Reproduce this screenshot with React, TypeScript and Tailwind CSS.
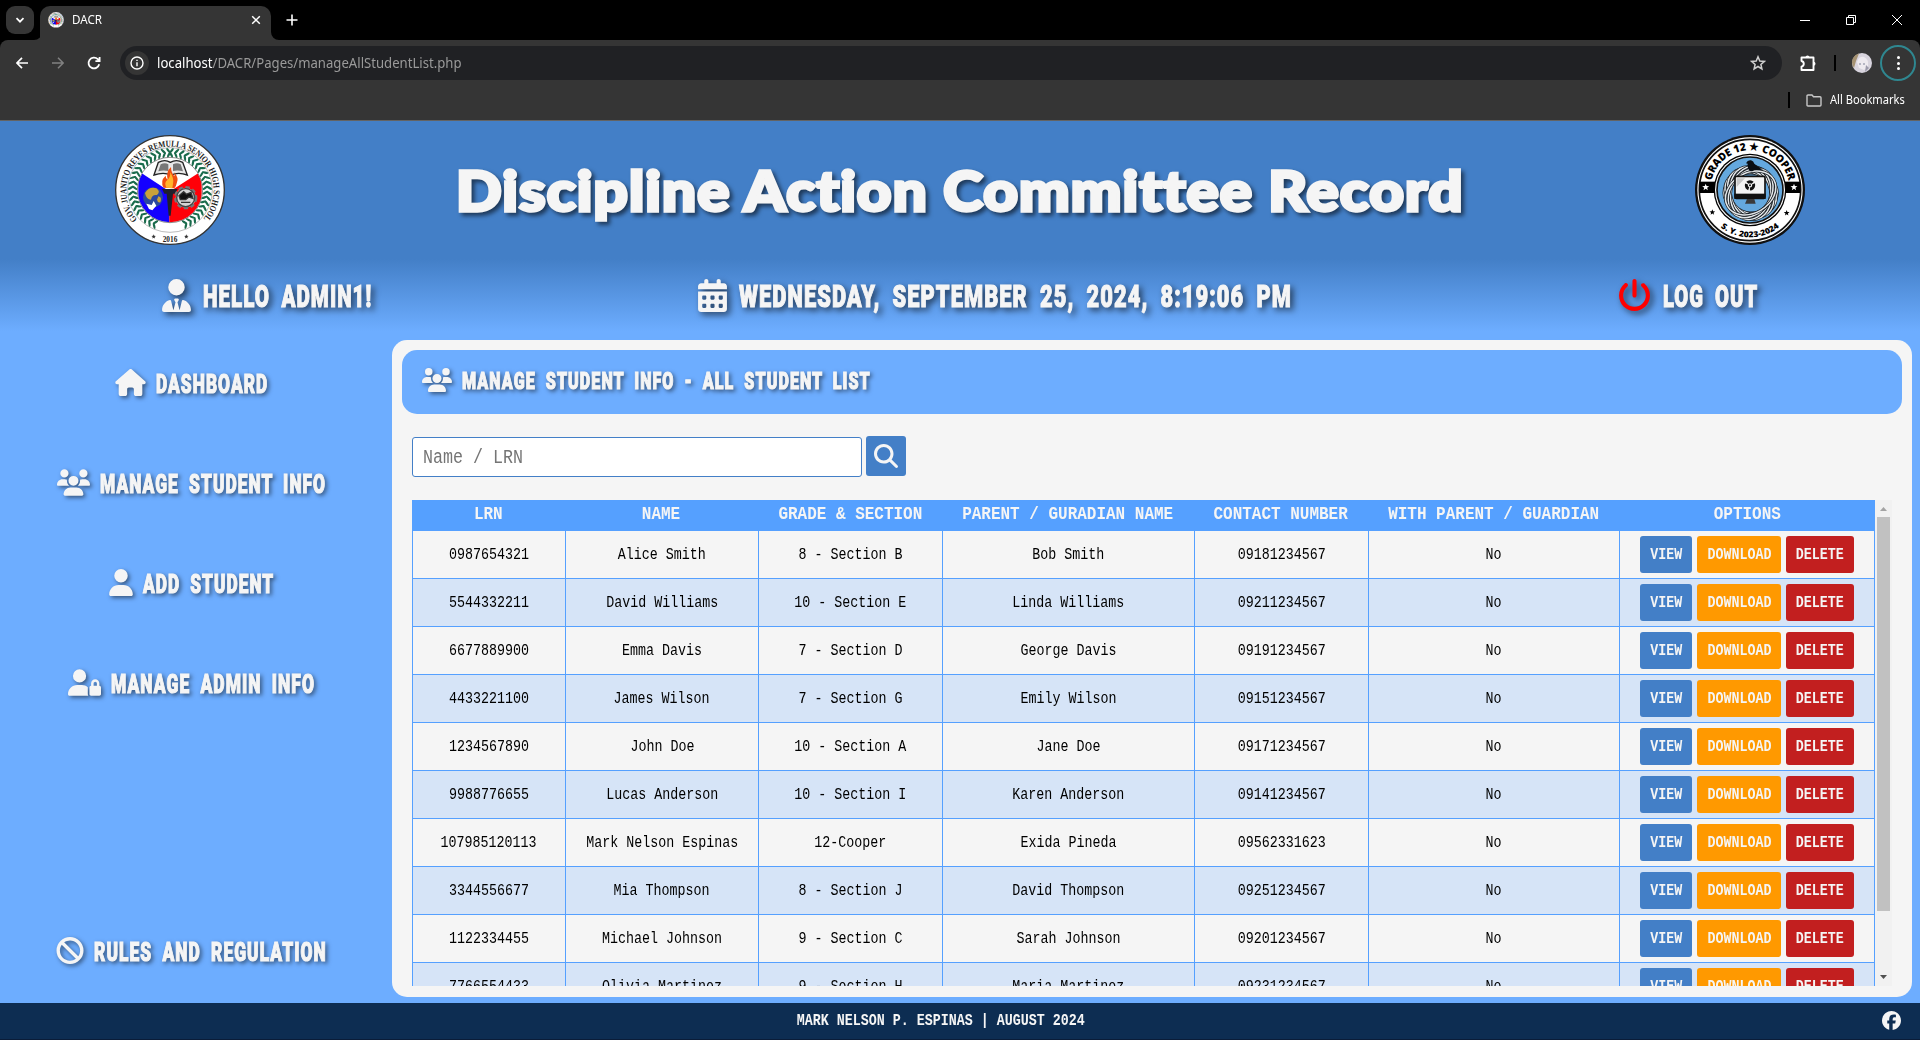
import { useLayoutEffect, useRef, type ReactNode } from "react";
import {
  FaBan,
  FaCalendarDays,
  FaFacebook,
  FaHouse,
  FaMagnifyingGlass,
  FaPowerOff,
  FaUser,
  FaUserLock,
  FaUserTie,
  FaUsers,
} from "react-icons/fa6";

/** Condenses or widens a line of text so that it fills the box's width. */
function Fit({ className, children }: { className: string; children: ReactNode }) {
  const box = useRef<HTMLSpanElement>(null);
  const line = useRef<HTMLSpanElement>(null);
  useLayoutEffect(() => {
    if (box.current && line.current) {
      line.current.style.transform = `scaleX(${box.current.clientWidth / line.current.offsetWidth})`;
    }
  }, []);
  return (
    <span ref={box} className={`flex shrink-0 items-center ${className}`}>
      <span ref={line} className="inline-block shrink-0 origin-left whitespace-pre">
        {children}
      </span>
    </span>
  );
}

/** Narrow monospace text: half an em per character. */
function Mono({ children }: { children: ReactNode }) {
  return <span className="inline-block scale-x-[0.833] whitespace-pre">{children}</span>;
}

const DISPLAY = "font-['Roboto'] font-black uppercase leading-none text-[#f5f5f5] [-webkit-text-stroke:1.1px_#f5f5f5]";

function starPoints(cx: number, cy: number, r: number) {
  return Array.from({ length: 10 }, (_, i) => {
    const a = (-90 + i * 36) * (Math.PI / 180);
    const d = i % 2 ? r * 0.42 : r;
    return `${cx + d * Math.cos(a)},${cy + d * Math.sin(a)}`;
  }).join(" ");
}

function SchoolSeal({ className }: { className: string }) {
  const leaves = Array.from({ length: 21 }, (_, i) => 96 + i * 7.7);
  return (
    <svg viewBox="0 0 330 330" className={className}>
      <defs>
        <path id="seal-arc" d="M67 253 A131 131 0 1 1 263 253" />
        <clipPath id="seal-disc">
          <circle cx="165" cy="165" r="97" />
        </clipPath>
      </defs>
      <circle cx="165" cy="165" r="163" fill="#fff" stroke="#333" strokeWidth="4" />
      <circle cx="165" cy="165" r="127" fill="#fff" stroke="#777" strokeWidth="1.5" />
      <text fontSize="27" fontWeight="700" fill="#1c1c1c" className="font-['Liberation_Serif']">
        <textPath href="#seal-arc" textLength="598" lengthAdjust="spacingAndGlyphs">
          GOV. JUANITO REYES REMULLA SENIOR HIGH SCHOOL
        </textPath>
      </text>
      {leaves.map((a) => (
        <g key={a} fill="#1a6b4c">
          {[1, -1].map((side) => (
            <g key={side} transform={`translate(165 165) scale(${side} 1) rotate(${a + 174})`}>
              <ellipse cx="119" cy="0" rx="10" ry="3.4" transform="rotate(38 112 0)" />
              <ellipse cx="105" cy="0" rx="9.5" ry="3.4" transform="rotate(-30 112 0)" />
            </g>
          ))}
        </g>
      ))}
      <circle cx="165" cy="165" r="97" fill="#fff" />
      <g clipPath="url(#seal-disc)">
        <path d="M165 170 L70 108 V280 H163 Z" fill="#1400ff" />
        <path d="M163 170 L260 108 V280 H163 Z" fill="#ff0008" />
      </g>
      <circle cx="165" cy="165" r="98" fill="none" stroke="#555" strokeWidth="2" />
      <path d="M130 82 Q150 72 166 82 Q184 72 203 82 L217 120 Q190 110 168 120 Q146 110 117 120 Z" fill="#e8e8e8" stroke="#222" strokeWidth="4" />
      <path d="M137 88 Q150 82 160 88 V108 Q144 104 130 109 Z M174 88 Q186 82 197 88 L204 109 Q188 104 174 108 Z" fill="#777" />
      <path d="M146 158 Q134 138 152 122 Q152 132 158 134 Q152 110 168 96 Q168 112 178 124 Q180 116 178 112 Q192 130 186 142 Q184 154 178 160 Z" fill="#f04e10" />
      <path d="M154 158 Q146 142 158 134 Q166 128 166 112 Q178 132 174 146 L172 160 Z" fill="#ffb52a" />
      <path d="M141 162 H188 L180 176 H174 L167 242 H161 L155 176 H148 Z" fill="#20202c" />
      <circle cx="114" cy="187" r="30" fill="#2b48a0" />
      <path d="M90 174 Q102 154 124 160 Q138 170 126 180 Q110 178 108 194 Q94 194 90 174 Z M130 184 Q142 186 136 202 Q128 204 126 194 Z" fill="#c9a13a" />
      <path d="M94 206 L110 210 L116 198 L124 212 L112 226 L102 222 Z" fill="#fff" />
      <circle cx="212" cy="188" r="30" fill="#b8b8b8" stroke="#777" strokeWidth="10" strokeDasharray="12 8" />
      <circle cx="212" cy="188" r="27" fill="#d4d4d4" stroke="#444" strokeWidth="4" />
      <path d="M192 182 L206 170 L214 178 L228 172 L234 190 L222 186 L212 194 L196 194 Z M198 202 H226" fill="#111" stroke="#333" strokeWidth="4" />
      <text x="165" y="320" textAnchor="middle" fontSize="22" fontWeight="700" fill="#222" className="font-['Liberation_Serif']">
        2016
      </text>
      <polygon points={starPoints(116, 305, 7)} fill="#333" />
      <polygon points={starPoints(214, 305, 7)} fill="#333" />
    </svg>
  );
}

function CooperSeal({ className }: { className: string }) {
  const twigs = [0, 25, 50, 75, 100, 125, 150];
  return (
    <svg viewBox="0 0 330 330" className={className}>
      <defs>
        <path id="cooper-top" d="M46 165 A119 119 0 0 1 284 165" />
        <path id="cooper-bottom" d="M23 165 A142 142 0 0 0 307 165" />
      </defs>
      <circle cx="165" cy="165" r="165" fill="#111" />
      <circle cx="165" cy="165" r="158" fill="#fff" />
      <circle cx="165" cy="165" r="152" fill="#fff" stroke="#111" strokeWidth="5" />
      <rect x="14" y="140" width="302" height="34" fill="#000" />
      <circle cx="165" cy="165" r="109" fill="#000" />
      <circle cx="165" cy="165" r="105" fill="#fff" />
      <circle cx="165" cy="165" r="99" fill="#64a8de" stroke="#111" strokeWidth="5" />
      <text fontSize="32" fontWeight="800" fill="#000" className="font-['Open_Sans']">
        <textPath href="#cooper-top" startOffset="50%" textAnchor="middle" textLength="318" lengthAdjust="spacingAndGlyphs">
          GRADE 12 ★ COOPER
        </textPath>
      </text>
      <text fontSize="24" fontWeight="800" fill="#000" className="font-['Open_Sans']">
        <textPath href="#cooper-bottom" startOffset="50%" textAnchor="middle" textLength="190" lengthAdjust="spacingAndGlyphs">
          S. Y. 2023-2024
        </textPath>
      </text>
      <polygon points={starPoints(32, 157, 11)} fill="#fff" />
      <polygon points={starPoints(297, 157, 11)} fill="#fff" />
      <polygon points={starPoints(52, 232, 9)} fill="#000" />
      <polygon points={starPoints(275, 234, 9)} fill="#000" />
      {twigs.map((a) => (
        <g key={a} fill="none" transform={`rotate(${a} 167 174)`}>
          <ellipse cx="167" cy="174" rx="80" ry="60" stroke="#1a1f24" strokeWidth="9" />
          <ellipse cx="167" cy="174" rx="80" ry="60" stroke="#e3e7ea" strokeWidth="4.5" />
        </g>
      ))}
      <rect x="120" y="124" width="90" height="66" rx="4" fill="#f4f4f4" stroke="#111" strokeWidth="5" />
      <rect x="118" y="176" width="94" height="16" fill="#111" />
      <path d="M156 192 H178 L182 206 H150 Z" fill="#3a3a3a" />
      <path d="M125 130 H150 L125 156 Z" fill="#c8c8c8" />
      <circle cx="165" cy="151" r="11" fill="none" stroke="#111" strokeWidth="9" strokeDasharray="17 4" />
      <circle cx="165" cy="151" r="3" fill="#111" />
      <path d="M153 85 Q158 74 168 76 Q176 78 178 86 L196 100 L206 102 L196 105 H178 L172 109 H166 Q156 100 158 86 Z" fill="#0b0f14" />
    </svg>
  );
}

function BrowserChrome() {
  return (
    <div className="h-[121px] shrink-0 bg-black font-['Noto_Sans'] text-white">
      <div className="flex h-10 items-start justify-between">
        <div className="flex h-10 items-start pl-1.5 pt-1.5">
          <div className="flex h-7 w-7 items-center justify-center rounded-[9px] bg-[#353535]">
            <svg viewBox="0 0 10 10" className="h-2.5 w-2.5 fill-none stroke-white stroke-[1.7]">
              <path d="M1.5 3.2 L5 6.7 L8.5 3.2" />
            </svg>
          </div>
          <div className="flex h-[34px] items-end">
            <svg viewBox="0 0 8 8" className="-mr-0.5 h-2 w-2 fill-[#353535]">
              <path d="M8 0 V8 H0 A8 8 0 0 0 8 0 Z" />
            </svg>
            <div className="flex h-[34px] w-[231px] items-center rounded-t-[10px] bg-[#353535] pb-1.5 pl-2">
              <SchoolSeal className="h-4 w-4" />
              <Fit className="ml-2 w-[30px] text-xs">DACR</Fit>
              <svg viewBox="0 0 10 10" className="ml-auto mr-2.5 h-2.5 w-2.5 fill-none stroke-white stroke-[1.5]">
                <path d="M1.2 1.2 L8.8 8.8 M8.8 1.2 L1.2 8.8" />
              </svg>
            </div>
            <svg viewBox="0 0 8 8" className="h-2 w-2 fill-[#353535]">
              <path d="M0 0 V8 H8 A8 8 0 0 1 0 0 Z" />
            </svg>
          </div>
          <svg viewBox="0 0 12 12" className="ml-[7px] mt-2 h-3 w-3 fill-none stroke-white stroke-[1.6]">
            <path d="M6 0.5 V11.5 M0.5 6 H11.5" />
          </svg>
        </div>
        <div className="flex h-10 items-center gap-9 pr-[18px]">
          <svg viewBox="0 0 10 10" className="h-2.5 w-2.5 stroke-white">
            <path d="M0 5.5 H10" />
          </svg>
          <svg viewBox="0 0 10 10" className="h-2.5 w-2.5 fill-none stroke-white">
            <path d="M0.5 2.5 H7.5 V9.5 H0.5 Z M2.5 2.5 V0.5 H9.5 V7.5 H7.5" />
          </svg>
          <svg viewBox="0 0 10 10" className="h-2.5 w-2.5 fill-none stroke-white">
            <path d="M0 0 L10 10 M10 0 L0 10" />
          </svg>
        </div>
      </div>

      <div className="h-[81px] rounded-t-lg border-b border-[#636363] bg-[#353535] pt-1.5">
        <div className="flex h-[34px] items-center">
          <svg viewBox="0 0 12 12" className="ml-4 h-3 w-3 fill-none stroke-white stroke-[1.7]">
            <path d="M12 6 H1 M6 0.8 L0.9 6 L6 11.2" />
          </svg>
          <svg viewBox="0 0 12 12" className="ml-6 h-3 w-3 fill-none stroke-[#818181] stroke-[1.5]">
            <path d="M0 6 H11 M6 0.8 L11.1 6 L6 11.2" />
          </svg>
          <svg viewBox="0 0 14 14" className="ml-[23px] h-3.5 w-3.5 fill-none stroke-white stroke-[1.8]">
            <path d="M12.2 8.3 A5.4 5.4 0 1 1 10.8 3.2 L12.3 4.8 M12.6 1 V5.2 H8.4" />
          </svg>
          <div className="ml-[19px] flex h-[34px] w-[1662px] items-center rounded-full bg-[#202124] pl-[5px]">
            <div className="flex h-6 w-6 items-center justify-center rounded-full bg-[#353535]">
              <svg viewBox="0 0 14 14" className="h-3.5 w-3.5 fill-none stroke-white stroke-[1.4]">
                <circle cx="7" cy="7" r="6" />
                <path d="M7 6.2 V10.2 M7 3.7 V5.1" />
              </svg>
            </div>
            <Fit className="ml-2 w-[305px] text-sm text-[#9a9a9a]">
              <span className="text-white">localhost</span>/DACR/Pages/manageAllStudentList.php
            </Fit>
            <svg viewBox="0 0 16 16" className="ml-auto mr-4 h-4 w-4 fill-none stroke-[#cfcfcf] stroke-[1.5]">
              <path d="M8 1.8 L9.8 6 L14.3 6.4 L10.9 9.4 L11.9 13.9 L8 11.5 L4.1 13.9 L5.1 9.4 L1.7 6.4 L6.2 6 Z" />
            </svg>
          </div>
          <svg viewBox="0 0 18 18" className="ml-[17px] h-[18px] w-[18px] fill-none stroke-white stroke-[1.9]">
            <path d="M2.5 3.5 H14.5 V16 H2.5 V12.7 Q4.8 12 4.8 9.8 Q4.8 7.6 2.5 7 Z" strokeLinejoin="round" />
            <path d="M6.5 3.5 A2 2 0 0 1 10.5 3.5 Z M14.5 7.8 A2 2 0 0 1 14.5 11.8 Z" className="fill-white stroke-none" />
          </svg>
          <div className="ml-[17px] h-4 w-0.5 bg-black" />
          <svg viewBox="0 0 20 20" className="ml-4 h-5 w-5">
            <circle cx="10" cy="10" r="10" fill="#d8d4de" />
            <path d="M1 5 A10 10 0 0 1 7 0.6 L4 8 L2 15 A10 10 0 0 1 1 5 Z" fill="#a59272" />
            <path d="M5 9 Q7 3 12 4 Q17 6 16 14 L12 17 L7 15 Z" fill="#eeeaf0" />
            <path d="M8 10 V12 M12 10 V12" stroke="#7f8398" />
            <path d="M14 12 L17 15 L13 19 Z" fill="#9c9aab" />
          </svg>
          <div className="ml-2 flex h-9 w-9 shrink-0 flex-col items-center justify-center gap-[2.5px] rounded-full border-2 border-[#2f8790]">
            <span className="h-[3px] w-[3px] rounded-full bg-white" />
            <span className="h-[3px] w-[3px] rounded-full bg-white" />
            <span className="h-[3px] w-[3px] rounded-full bg-white" />
          </div>
        </div>
        <div className="flex h-10 items-center justify-end pr-[15px]">
          <div className="h-4 w-0.5 bg-black" />
          <svg viewBox="0 0 16 13" className="ml-4 h-[13px] w-4 fill-none stroke-[#c7c7c7] stroke-[1.4]">
            <path d="M1 2 Q1 1 2 1 H6 L7.5 2.8 H14 Q15 2.8 15 3.8 V11 Q15 12 14 12 H2 Q1 12 1 11 Z" />
          </svg>
          <Fit className="ml-2 w-[75px] text-xs">All Bookmarks</Fit>
        </div>
      </div>
    </div>
  );
}

const NAV = [
  { label: "Dashboard", Icon: FaHouse, icon: "w-[31px]", text: "w-[112px]" },
  { label: "Manage Student Info", Icon: FaUsers, icon: "w-[33px]", text: "w-[226px]" },
  { label: "Add Student", Icon: FaUser, icon: "w-6", text: "w-[131px]" },
  { label: "Manage Admin Info", Icon: FaUserLock, icon: "w-[33px]", text: "w-[204px]" },
  { label: "Rules and Regulation", Icon: FaBan, icon: "w-[28px]", text: "w-[233px]" },
];

function NavItem({ label, Icon, icon, text }: (typeof NAV)[number]) {
  return (
    <a className="flex h-[100px] w-[383px] items-center justify-center gap-2.5 text-[#f5f5f5] drop-shadow-[2px_2px_2px_rgba(0,0,0,0.5)]">
      <Icon className={`mb-px h-[27px] shrink-0 ${icon}`} />
      <Fit className={`pt-[2px] text-[25px] tracking-[1.5px] [word-spacing:7px] ${DISPLAY} ${text}`}>{label}</Fit>
    </a>
  );
}

const HEADINGS = [
  "LRN",
  "NAME",
  "GRADE & SECTION",
  "PARENT / GURADIAN NAME",
  "CONTACT NUMBER",
  "WITH PARENT / GUARDIAN",
  "OPTIONS",
];

const STUDENTS = [
  ["0987654321", "Alice Smith", "8 - Section B", "Bob Smith", "09181234567", "No"],
  ["5544332211", "David Williams", "10 - Section E", "Linda Williams", "09211234567", "No"],
  ["6677889900", "Emma Davis", "7 - Section D", "George Davis", "09191234567", "No"],
  ["4433221100", "James Wilson", "7 - Section G", "Emily Wilson", "09151234567", "No"],
  ["1234567890", "John Doe", "10 - Section A", "Jane Doe", "09171234567", "No"],
  ["9988776655", "Lucas Anderson", "10 - Section I", "Karen Anderson", "09141234567", "No"],
  ["107985120113", "Mark Nelson Espinas", "12-Cooper", "Exida Pineda", "09562331623", "No"],
  ["3344556677", "Mia Thompson", "8 - Section J", "David Thompson", "09251234567", "No"],
  ["1122334455", "Michael Johnson", "9 - Section C", "Sarah Johnson", "09201234567", "No"],
  ["7766554433", "Olivia Martinez", "9 - Section H", "Maria Martinez", "09231234567", "No"],
];

const COLUMNS = "grid grid-cols-[153px_193px_184px_252px_174px_251px_256px]";

const ACTIONS = [
  { label: "VIEW", style: "w-[52px] bg-[#437fc7]" },
  { label: "DOWNLOAD", style: "w-[84px] bg-[#ff9900]" },
  { label: "DELETE", style: "w-[68px] bg-[#c21f1f]" },
];

function StudentTable() {
  return (
    <div className="flex h-[486px] overflow-hidden">
      <div className="w-[1463px] font-['Liberation_Mono'] text-base">
        <div className={`${COLUMNS} h-[31px] bg-[#55a0ff] pb-px text-[19.2px] font-bold leading-none text-[#f5f5f5]`}>
          {HEADINGS.map((heading) => (
            <div key={heading} className="-mx-5 flex items-center justify-center">
              <Mono>{heading}</Mono>
            </div>
          ))}
        </div>
        {STUDENTS.map((student) => (
          <div
            key={student[0]}
            className={`${COLUMNS} h-12 border-b border-r border-[#55a0ff] text-black odd:bg-[#d6e4f7] even:bg-[#f5f5f5]`}
          >
            {student.map((value, i) => (
              <div key={i} className="flex items-center justify-center border-l border-[#55a0ff]">
                <Mono>{value}</Mono>
              </div>
            ))}
            <div className="mr-px flex items-center justify-center gap-[5px] border-l border-[#55a0ff]">
              {ACTIONS.map(({ label, style }) => (
                <button
                  key={label}
                  className={`flex h-[37px] shrink-0 items-center justify-center rounded-[3px] font-bold text-[#f5f5f5] ${style}`}
                >
                  <Mono>{label}</Mono>
                </button>
              ))}
            </div>
          </div>
        ))}
      </div>
      <div className="flex w-[17px] flex-col items-center bg-[#f1f1f1]">
        <svg viewBox="0 0 17 17" className="h-[17px] w-[17px] fill-[#a3a3a3]">
          <path d="M5 11 L8.5 7 L12 11 Z" />
        </svg>
        <div className="h-[394px] w-[13px] bg-[#c1c1c1]" />
        <svg viewBox="0 0 17 17" className="mt-auto h-[17px] w-[17px] fill-[#505050]">
          <path d="M5 6 L8.5 10 L12 6 Z" />
        </svg>
      </div>
    </div>
  );
}

export default function App() {
  return (
    <div className="flex h-[1040px] w-[1920px] flex-col overflow-hidden bg-[#6dadff]">
      <BrowserChrome />

      <header className="shrink-0">
        <div className="flex h-[138px] items-center justify-between bg-[#437fc7] px-[115px]">
          <SchoolSeal className="h-[110px] w-[110px]" />
          <h1 className="pt-px drop-shadow-[3px_3px_2px_rgba(0,0,0,0.55)]">
            <Fit className="w-[1008px] font-['Lato'] text-[55px] font-black leading-none tracking-[1px] text-[#f5f5f5] [-webkit-text-stroke:3.4px_#f5f5f5]">
              Discipline Action Committee Record
            </Fit>
          </h1>
          <CooperSeal className="h-[110px] w-[110px]" />
        </div>
        <div className="flex h-[72px] items-center justify-between bg-linear-to-b from-[#437fc7] to-[#6dadff] pl-[162px] pr-[162px] text-[#f5f5f5]">
          <div className="flex items-center gap-3 drop-shadow-[3px_3px_3px_rgba(0,0,0,0.6)]">
            <FaUserTie className="h-[33px] w-[29px]" />
            <Fit className={`w-[169px] pt-[3px] text-[31px] tracking-[1.5px] [word-spacing:8px] ${DISPLAY}`}>Hello Admin1!</Fit>
          </div>
          <div className="flex items-center gap-3 drop-shadow-[3px_3px_3px_rgba(0,0,0,0.6)]">
            <FaCalendarDays className="h-[33px] w-[29px]" />
            <Fit className={`w-[553px] pt-[3px] text-[31px] tracking-[1.5px] [word-spacing:8px] ${DISPLAY}`}>
              Wednesday, September 25, 2024, 8:19:06 PM
            </Fit>
          </div>
          <div className="flex items-center gap-3 drop-shadow-[3px_3px_3px_rgba(0,0,0,0.6)]">
            <FaPowerOff className="h-[33px] w-[33px] text-[#ff0000]" />
            <Fit className={`w-[95px] pt-[3px] text-[31px] tracking-[1.5px] [word-spacing:8px] ${DISPLAY}`}>Log Out</Fit>
          </div>
        </div>
      </header>

      <main className="flex h-[672px] shrink-0">
        <nav className="flex w-[392px] shrink-0 flex-col pb-0.5 pt-0.5">
          {NAV.slice(0, 4).map((item) => (
            <NavItem key={item.label} {...item} />
          ))}
          <div className="mt-auto">
            <NavItem {...NAV[4]} />
          </div>
        </nav>

        <section className="mt-[9px] h-[657px] w-[1520px] rounded-[15px] bg-[#f5f5f5] p-2.5">
          <div className="flex h-16 items-center rounded-[15px] bg-[#6dadff] pl-5">
            <div className="-mt-1 flex items-center gap-2.5 text-[#f5f5f5] drop-shadow-[2px_2px_2px_rgba(0,0,0,0.5)]">
              <FaUsers className="h-6 w-[30px]" />
              <Fit className={`w-[409px] pt-[3px] text-[23px] tracking-[1.5px] [word-spacing:7px] ${DISPLAY}`}>
                Manage Student Info - All Student List
              </Fit>
            </div>
          </div>
          <form className="ml-2.5 mt-[22px] flex h-10 gap-1">
            <div className="mt-px flex h-10 w-[450px] items-center rounded-[3px] border border-[#437fc7] bg-white pl-2.5 pt-0.5 font-['Liberation_Mono'] text-xl text-[#757575]">
              <span className="inline-block origin-left scale-x-[0.833] whitespace-pre">Name / LRN</span>
            </div>
            <button className="flex h-10 w-10 items-center justify-center rounded-[3px] bg-[#437fc7] text-[#f5f5f5]">
              <FaMagnifyingGlass className="h-6 w-6" />
            </button>
          </form>
          <div className="ml-2.5 mt-6">
            <StudentTable />
          </div>
        </section>
      </main>

      <footer className="relative flex flex-1 items-center justify-center border-b border-[#0a1c38] bg-[#0d2d52] pr-[38px] font-['Liberation_Mono'] text-base font-bold text-[#f5f5f5]">
        <Mono>MARK NELSON P. ESPINAS | AUGUST 2024</Mono>
        <FaFacebook className="absolute right-[19px] top-2 h-[19px] w-[19px]" />
      </footer>
    </div>
  );
}
